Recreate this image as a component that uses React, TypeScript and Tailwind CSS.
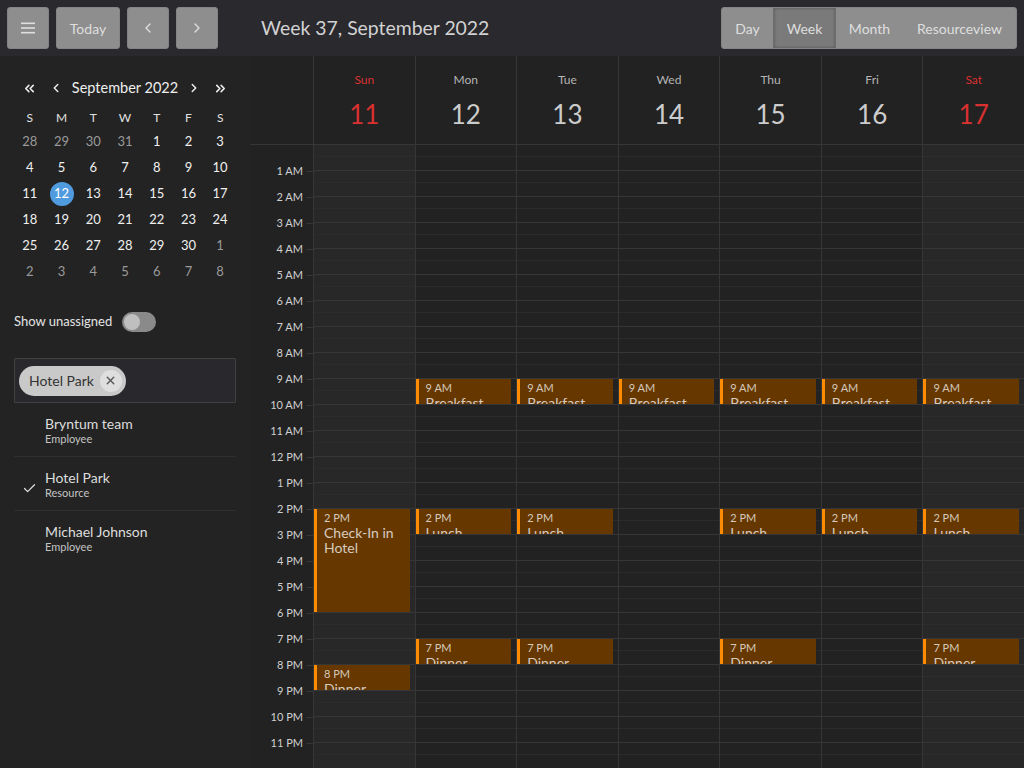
import React from "react";
import { ChevronLeft, ChevronRight, ChevronsLeft, ChevronsRight, Check, X } from "lucide-react";

type Ev = { day: number; start: number; end: number; time: string; title: string };

const events: Ev[] = [
  { day: 0, start: 14, end: 18, time: "2 PM", title: "Check-In in Hotel" },
  { day: 0, start: 20, end: 21, time: "8 PM", title: "Dinner" },
  ...[1, 2, 3, 4, 5, 6].map((d) => ({ day: d, start: 9, end: 10, time: "9 AM", title: "Breakfast" })),
  ...[1, 2, 4, 5, 6].map((d) => ({ day: d, start: 14, end: 15, time: "2 PM", title: "Lunch" })),
  ...[1, 2, 4, 6].map((d) => ({ day: d, start: 19, end: 20, time: "7 PM", title: "Dinner" })),
];

const days = [
  { name: "Sun", num: 11, red: true },
  { name: "Mon", num: 12 },
  { name: "Tue", num: 13 },
  { name: "Wed", num: 14 },
  { name: "Thu", num: 15 },
  { name: "Fri", num: 16 },
  { name: "Sat", num: 17, red: true },
];

const hourLabels = Array.from({ length: 23 }, (_, i) => {
  const h = i + 1;
  if (h < 12) return `${h} AM`;
  if (h === 12) return "12 PM";
  return `${h - 12} PM`;
});

const weeks: { d: number; other: boolean }[][] = [
  [28, 29, 30, 31].map((d) => ({ d, other: true })).concat([1, 2, 3].map((d) => ({ d, other: false }))),
  [4, 5, 6, 7, 8, 9, 10].map((d) => ({ d, other: false })),
  [11, 12, 13, 14, 15, 16, 17].map((d) => ({ d, other: false })),
  [18, 19, 20, 21, 22, 23, 24].map((d) => ({ d, other: false })),
  [25, 26, 27, 28, 29, 30].map((d) => ({ d, other: false })).concat([{ d: 1, other: true }]),
  [2, 3, 4, 5, 6, 7, 8].map((d) => ({ d, other: true })),
];

const btn =
  "h-[42px] rounded-[3px] bg-[#8e8e8e] border border-[#848484] text-[#dedede] text-[14px] flex items-center justify-center";

function Toolbar() {
  return (
    <div className="h-[56px] shrink-0 bg-[#2a292e] flex items-center px-[7px]">
      <div className="flex items-center gap-[7px]">
        <button className={btn + " w-[42px]"}>
          <svg width="14" height="12" viewBox="0 0 14 12">
            <rect x="0" y="0.5" width="14" height="1.6" fill="#dedede" />
            <rect x="0" y="5.2" width="14" height="1.6" fill="#dedede" />
            <rect x="0" y="9.9" width="14" height="1.6" fill="#dedede" />
          </svg>
        </button>
        <button className={btn + " w-[64px]"}>Today</button>
        <button className={btn + " w-[42px]"}>
          <ChevronLeft size={16} strokeWidth={2} color="#dedede" />
        </button>
        <button className={btn + " w-[42px]"}>
          <ChevronRight size={16} strokeWidth={2} color="#dedede" />
        </button>
      </div>
      <div className="ml-[43px] text-[19.4px] text-[#d2d2d2]">Week 37, September 2022</div>
      <div className="ml-auto flex h-[42px] rounded-[3px] overflow-hidden border border-[#848484] bg-[#8e8e8e] text-[14px] text-[#dedede]">
        <div className="px-[13px] flex items-center w-[51px] justify-center">Day</div>
        <div className="w-[63px] flex items-center justify-center bg-[#7a7a7a] shadow-[inset_0_0_3px_rgba(0,0,0,0.35)] border-x border-[#6e6e6e]">
          Week
        </div>
        <div className="w-[67px] flex items-center justify-center">Month</div>
        <div className="w-[113px] flex items-center justify-center">Resourceview</div>
      </div>
    </div>
  );
}

function Sidebar() {
  return (
    <div className="w-[250px] shrink-0 bg-[#232323] flex flex-col px-[14px]">
      <div className="mt-[20px] h-[24px] flex items-center text-[#eeeeee]">
        <div className="w-[31.7px] flex justify-center">
          <ChevronsLeft size={15} strokeWidth={2.5} />
        </div>
        <div className="w-[20px] flex justify-center">
          <ChevronLeft size={14} strokeWidth={2.5} />
        </div>
        <div className="flex-1 text-center text-[14.5px]">September 2022</div>
        <div className="w-[20px] flex justify-center">
          <ChevronRight size={14} strokeWidth={2.5} />
        </div>
        <div className="w-[31.7px] flex justify-center">
          <ChevronsRight size={15} strokeWidth={2.5} />
        </div>
      </div>
      <div className="mt-[7px] h-[22px] grid grid-cols-7 items-center text-[12px] text-[#e0e0e0]">
        {["S", "M", "T", "W", "T", "F", "S"].map((d, i) => (
          <div key={i} className="text-center">
            {d}
          </div>
        ))}
      </div>
      {weeks.map((w, wi) => (
        <div key={wi} className="h-[26px] grid grid-cols-7 items-center text-[13px]">
          {w.map((c, ci) => {
            const sel = !c.other && c.d === 12;
            return (
              <div key={ci} className="flex justify-center">
                <div
                  className={
                    "w-[24px] h-[24px] rounded-full flex items-center justify-center " +
                    (sel ? "bg-[#4f9bde] text-white" : c.other ? "text-[#9a9a9a]" : "text-[#f0f0f0]")
                  }
                >
                  {c.d}
                </div>
              </div>
            );
          })}
        </div>
      ))}
      <div className="mt-[27px] h-[20px] flex items-center">
        <span className="text-[13px] text-[#e4e4e4]">Show unassigned</span>
        <div className="ml-[10px] w-[34px] h-[20px] rounded-full bg-[#8a8a8a] flex items-center px-[2px]">
          <div className="w-[16px] h-[16px] rounded-full bg-[#bfbfbf]" />
        </div>
      </div>
      <div className="mt-[26px] h-[45px] border border-[#414141] bg-[#29282d] rounded-[1px] flex items-center px-[4px]">
        <div className="h-[30px] rounded-full bg-[#c9c9c9] flex items-center pl-[10px] pr-[4px] gap-[6px]">
          <span className="text-[14px] text-[#333333]">Hotel Park</span>
          <div className="w-[22px] h-[22px] rounded-full bg-[#dedede] flex items-center justify-center">
            <X size={13} strokeWidth={2.5} color="#555555" />
          </div>
        </div>
      </div>
      {[
        { n: "Bryntum team", s: "Employee", c: false },
        { n: "Hotel Park", s: "Resource", c: true },
        { n: "Michael Johnson", s: "Employee", c: false },
      ].map((it, i) => (
        <div key={i} className={"flex items-center pt-[12px] pb-[11px] " + (i < 2 ? "border-b border-[#2f2f2f]" : "")}>
          <div className="w-[31px] flex justify-center pt-[8px]">
            {it.c && <Check size={15} strokeWidth={2} color="#dddddd" />}
          </div>
          <div className="flex flex-col">
            <div className="h-[18px] leading-[18px] text-[14px] text-[#dddddd]">{it.n}</div>
            <div className="h-[12px] leading-[12px] text-[11px] text-[#c4c4c4]">{it.s}</div>
          </div>
        </div>
      ))}
    </div>
  );
}

function EventBlock({ e }: { e: Ev }) {
  return (
    <div
      className="absolute left-0 right-[5px] bg-[#663800] border-l-[3px] border-[#ff8c00] overflow-hidden pl-[7px] pt-[2px]"
      style={{ top: e.start * 26, height: (e.end - e.start) * 26 - 1 }}
    >
      <div className="text-[11px] leading-[14px] text-[#d4c8bc]">{e.time}</div>
      <div className="text-[14px] leading-[15px] text-[#d6cbc0] pr-[4px]">{e.title}</div>
    </div>
  );
}

function Main() {
  return (
    <div className="flex-1 flex flex-col bg-[#222222] overflow-hidden">
      <div className="h-[89px] shrink-0 grid grid-cols-[63px_repeat(7,1fr)] border-b border-[#363636]">
        <div />
        {days.map((d, i) => (
          <div key={i} className="border-l border-[#363636] flex flex-col items-center">
            <div className={"mt-[16px] text-[12px] h-[16px] leading-[16px] " + (d.red ? "text-[#d93030]" : "text-[#b4b4b4]")}>
              {d.name}
            </div>
            <div className={"mt-[10px] text-[26px] h-[32px] leading-[32px] " + (d.red ? "text-[#d93030]" : "text-[#cccccc]")}>
              {d.num}
            </div>
          </div>
        ))}
      </div>
      <div className="flex-1 grid grid-cols-[63px_repeat(7,1fr)] overflow-hidden">
        <div className="flex flex-col">
          <div className="h-[13px] shrink-0" />
          {hourLabels.map((l, i) => (
            <div key={i} className="h-[26px] shrink-0 flex items-center justify-end">
              <span className="text-[11px] text-[#d0d0d0] mr-[3px]">{l}</span>
              <div className="w-[7px] h-px bg-[#363636]" />
            </div>
          ))}
        </div>
        {days.map((d, di) => (
          <div key={di} className={"relative border-l border-[#363636] " + (d.red ? "bg-[#282828]" : "")}>
            {Array.from({ length: 24 }).map((_, h) => (
              <div key={h} className="h-[26px] border-b border-[#363636] flex flex-col">
                <div className="h-[12px] border-b border-[#2c2c2c]" />
              </div>
            ))}
            {events
              .filter((e) => e.day === di)
              .map((e, k) => (
                <EventBlock key={k} e={e} />
              ))}
          </div>
        ))}
      </div>
    </div>
  );
}

export default function App() {
  return (
    <div
      className="w-[1024px] h-[768px] flex flex-col overflow-hidden bg-[#222222]"
      style={{ fontFamily: "Lato, 'Open Sans', sans-serif" }}
    >
      <Toolbar />
      <div className="flex-1 flex overflow-hidden">
        <Sidebar />
        <Main />
      </div>
    </div>
  );
}
